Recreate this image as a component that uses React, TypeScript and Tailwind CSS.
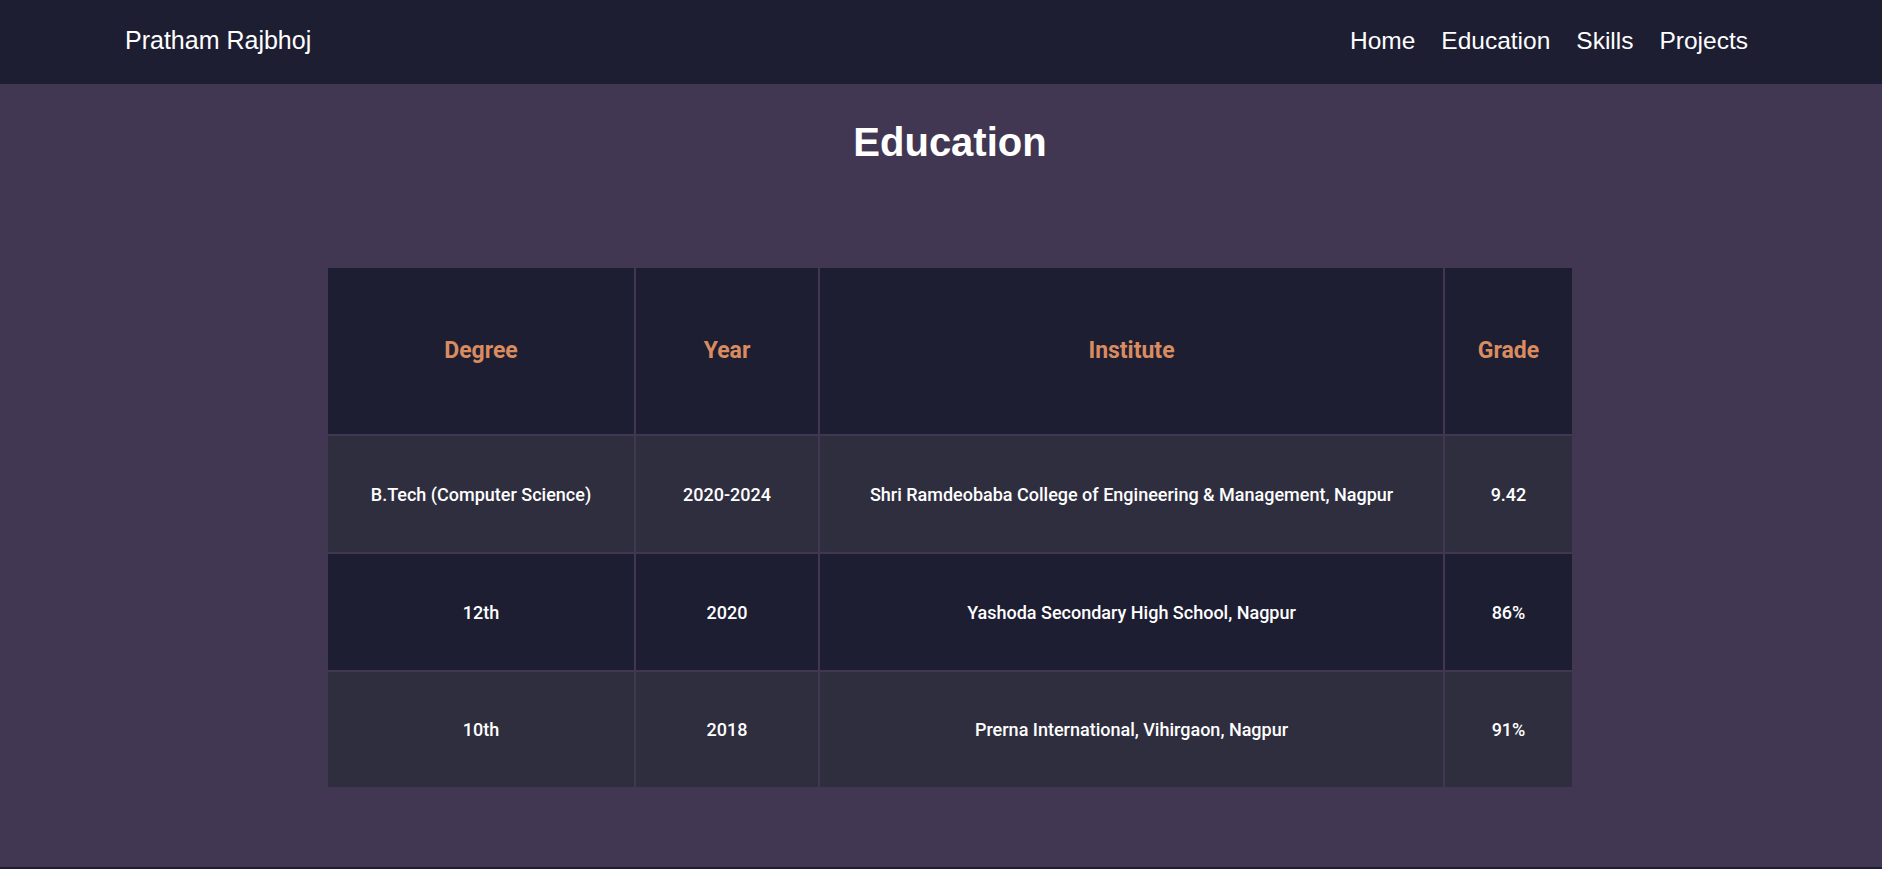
const rows = [
  { degree: 'B.Tech (Computer Science)', year: '2020-2024', institute: 'Shri Ramdeobaba College of Engineering & Management, Nagpur', grade: '9.42', cls: 'h-[116px] bg-[#2f2e3f]' },
  { degree: '12th', year: '2020', institute: 'Yashoda Secondary High School, Nagpur', grade: '86%', cls: 'h-[116px] bg-[#1e1e33]' },
  { degree: '10th', year: '2018', institute: 'Prerna International, Vihirgaon, Nagpur', grade: '91%', cls: 'h-[115px] bg-[#2f2e3f]' },
]

const navLinks = ['Home', 'Education', 'Skills', 'Projects']

export default function App() {
  return (
    <div className="min-h-screen bg-[#413752] font-['Liberation_Sans',Arial,sans-serif]">
      <nav className="flex h-[84px] items-center justify-between bg-[#1e1e33] pb-[2px] pl-[125px] pr-[134px] text-white">
        <span className="text-[25px]">Pratham Rajbhoj</span>
        <ul className="flex gap-[26px] text-[24.5px]">
          {navLinks.map((link) => (
            <li key={link}>
              <a href="#">{link}</a>
            </li>
          ))}
        </ul>
      </nav>

      <main className="flex h-[783px] flex-col items-center pl-[18px] pt-[34px]">
        <h1 className="text-[40px] font-bold leading-[48px] text-white">Education</h1>

        <table className="mt-[100px] w-[1248px] table-fixed border-separate border-spacing-[2px] text-center font-['Roboto',sans-serif] text-white">
          <colgroup>
            <col className="w-[306px]" />
            <col className="w-[182px]" />
            <col className="w-[623px]" />
            <col className="w-[127px]" />
          </colgroup>
          <thead>
            <tr className="h-[166px] bg-[#1e1e33] text-[23px] font-bold text-[#d98c5f]">
              <th>Degree</th>
              <th>Year</th>
              <th>Institute</th>
              <th>Grade</th>
            </tr>
          </thead>
          <tbody className="text-[18px] font-medium">
            {rows.map((row) => (
              <tr key={row.degree} className={row.cls}>
                <td>{row.degree}</td>
                <td>{row.year}</td>
                <td>{row.institute}</td>
                <td>{row.grade}</td>
              </tr>
            ))}
          </tbody>
        </table>
      </main>

      <footer className="h-[40px] bg-[#1e1e33]" />
    </div>
  )
}
